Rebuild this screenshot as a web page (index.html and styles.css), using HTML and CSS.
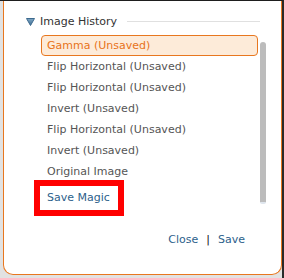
FILE: index.html
```html
<!DOCTYPE html>
<html lang="en">
<head>
  <meta charset="UTF-8" />
  <title>Image History</title>
  <link rel="stylesheet" href="styles.css">
</head>
<body>
  <div class="frame">
    <section class="history-panel" aria-labelledby="historyHeading">
      <header class="panel-header">
        <svg class="toggle-icon" width="9" height="8" viewBox="0 0 9 8" aria-hidden="true">
          <defs>
            <linearGradient id="triFill" x1="0" y1="0" x2="0" y2="1">
              <stop offset="0" stop-color="#7ea6c4"/>
              <stop offset="1" stop-color="#3f6f94"/>
            </linearGradient>
          </defs>
          <polygon points="0.5,0.5 8.5,0.5 4.5,7.5" fill="url(#triFill)" stroke="#3d6a8e" stroke-width="1" stroke-linejoin="round"/>
        </svg>
        <h2 id="historyHeading" class="panel-title">Image History</h2>
        <span class="header-rule"></span>
      </header>

      <div class="history-body">
        <ul class="history-list">
          <li class="history-item is-current">Gamma (Unsaved)</li>
          <li class="history-item">Flip Horizontal (Unsaved)</li>
          <li class="history-item">Flip Horizontal (Unsaved)</li>
          <li class="history-item">Invert (Unsaved)</li>
          <li class="history-item">Flip Horizontal (Unsaved)</li>
          <li class="history-item">Invert (Unsaved)</li>
          <li class="history-item">Original Image</li>
          <li class="history-item history-link is-marked">Save Magic</li>
        </ul>
        <div class="scroll-thumb"></div>
      </div>

      <footer class="panel-footer">
        <a href="#" class="footer-link">Close</a>
        <span class="footer-sep">|</span>
        <a href="#" class="footer-link">Save</a>
      </footer>
    </section>
  </div>
</body>
</html>
```

FILE: styles.css
```css
body {
  margin: 0;
  font-family: "DejaVu Sans", Verdana, sans-serif;
  font-size: 11px;
}

.frame {
  width: 284px;
  height: 278px;
  box-sizing: border-box;
  display: flex;
  padding-left: 3px;
  background: #e2e2e2;
  border-top: 1px solid #1e1e1e;
  border-right: 2px solid #2a2a2a;
}

.history-panel {
  width: 279px;
  height: 274px;
  box-sizing: border-box;
  display: flex;
  flex-direction: column;
  padding-top: 11px;
  background: #fff;
  border: 1px solid #e8771f;
  border-top: none;
  border-radius: 0 0 10px 10px;
}

.panel-header {
  display: flex;
  align-items: center;
  height: 19px;
  padding-left: 22px;
  padding-right: 21px;
}

.toggle-icon {
  flex: none;
  margin-top: 1px;
}

.panel-title {
  margin: 0 0 0 5px;
  font-size: 11px;
  font-weight: normal;
  color: #333;
}

.header-rule {
  flex: 1;
  height: 1px;
  margin-left: 10px;
  background: #e0e0e0;
}

.history-body {
  display: flex;
  gap: 2px;
  margin-top: 4px;
  padding-left: 37px;
}

.history-list {
  width: 217px;
  margin: 0;
  padding: 0;
  list-style: none;
}

.history-item {
  position: relative;
  height: 21px;
  box-sizing: border-box;
  padding-left: 6px;
  line-height: 21px;
  color: #555;
}

.history-item.is-current {
  padding-left: 5px;
  line-height: 19px;
  color: #e8731a;
  background: #fdebd9;
  border: 1px solid #e8771f;
  border-radius: 4px;
}

.history-link {
  margin-top: 5px;
  color: #2d5f8b;
}

.is-marked::after {
  content: "";
  position: absolute;
  left: -7px;
  top: -7px;
  width: 90px;
  height: 36px;
  box-sizing: border-box;
  border: 6px solid #ff0000;
}

.scroll-thumb {
  width: 6px;
  height: 160px;
  margin-top: 7px;
  background: #bcbcbc;
  border-radius: 3px 3px 2px 2px;
  border-bottom: 2px solid #dfe6ee;
}

.panel-footer {
  display: flex;
  justify-content: flex-end;
  align-items: center;
  margin-top: auto;
  margin-bottom: 27px;
  padding-right: 36px;
  line-height: 14px;
}

.footer-link {
  color: #2d5f8b;
  text-decoration: none;
}

.footer-sep {
  margin: 0 8px;
  color: #111;
}
```
